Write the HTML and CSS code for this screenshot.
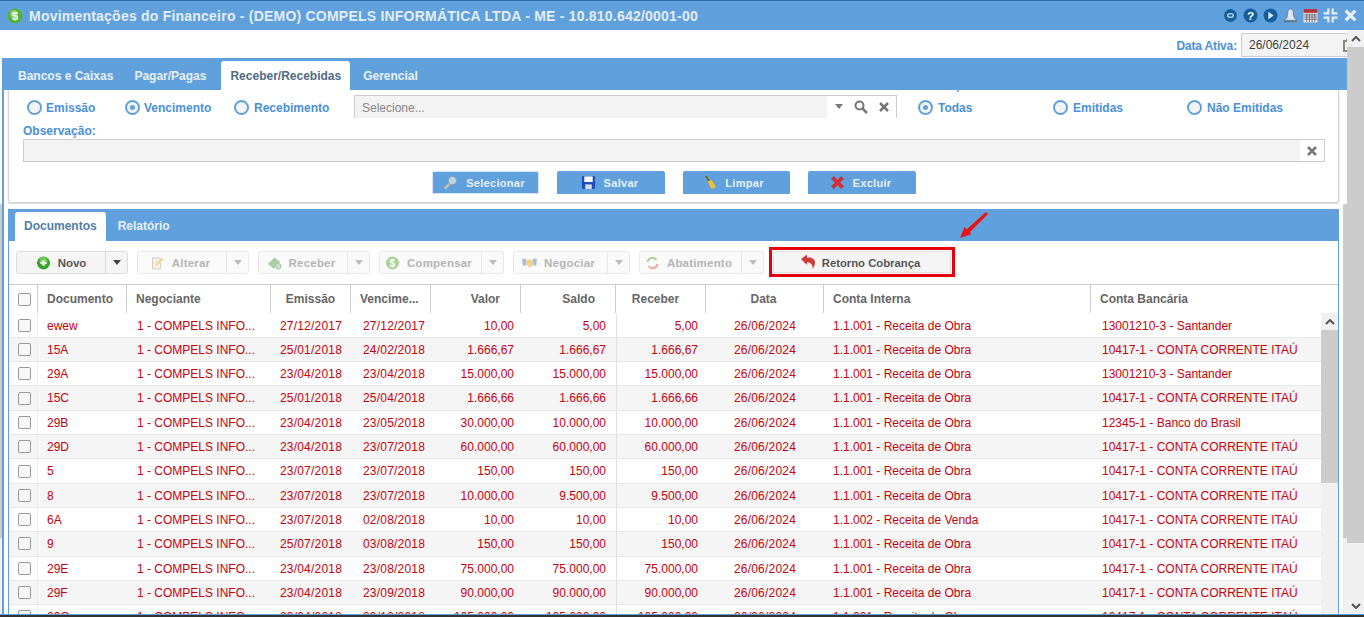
FILE: index.html
```html
<!DOCTYPE html>
<html lang="pt-BR">
<head>
<meta charset="utf-8">
<title>Movimentações do Financeiro</title>
<link rel="stylesheet" href="styles.css">
</head>
<body>
<svg class="defs" width="0" height="0" aria-hidden="true">
  <symbol id="caret" viewBox="0 0 10 6"><path d="M1 0h8L5 5z" fill="currentColor"/></symbol>
</svg>
<div class="app">
  <header class="titlebar">
    <svg class="logo" viewBox="0 0 16 16"><circle cx="8" cy="8" r="7.3" fill="#55b02c"/><circle cx="7" cy="6" r="4" fill="#8ed45c"/><text x="8" y="12" font-size="11" font-weight="700" text-anchor="middle" fill="#fff" font-family="Liberation Sans">$</text></svg>
    <h1 class="title">Movimentações do Financeiro - (DEMO) COMPELS INFORMÁTICA LTDA - ME - 10.810.642/0001-00</h1>
    <div class="winicons">
      <svg viewBox="0 0 14 14"><circle cx="7" cy="7" r="6" fill="#145f9b"/><rect x="4.500" y="5.500" width="5" height="3" rx="1" fill="none" stroke="#cfe0ef" stroke-width="1.200"/></svg>
      <svg viewBox="0 0 14 14"><circle cx="7" cy="7" r="6.500" fill="#145f9b"/><text x="7" y="11" font-size="11" font-weight="700" text-anchor="middle" fill="#fff" font-family="Liberation Sans">?</text></svg>
      <svg viewBox="0 0 14 14"><circle cx="7" cy="7" r="6.500" fill="#145f9b"/><path d="M5 3.500L10 7 5 10.500z" fill="#dbe8f3"/></svg>
      <svg viewBox="0 0 14 14"><path d="M7 1c1.800 0 2.300 1 2.600 3.500L10.300 9l2.700 2.500H1L3.700 9l.7-4.500C4.700 2 5.200 1 7 1z" fill="#dfe7ee" stroke="#5f7488" stroke-width=".7"/><rect x="1" y="12" width="12" height="1.300" fill="#5f7488"/></svg>
      <svg viewBox="0 0 14 14"><rect x=".5" y="1" width="13" height="12.500" fill="#e9e4e4"/><rect x=".5" y="1" width="13" height="3.500" fill="#b5343c"/><path d="M1 6.500h12M1 8.500h12M1 10.500h12M3.500 5v8M6 5v8M8.500 5v8M11 5v8" stroke="#6a6a7a" stroke-width=".8"/></svg>
      <svg viewBox="0 0 14 14"><path d="M5 .5V5H.5M9 .5V5h4.500M5 13.500V9H.5M9 13.500V9h4.500" fill="none" stroke="#e6eef6" stroke-width="2"/></svg>
      <svg viewBox="0 0 14 14"><path d="M2.500 2.500l9 9M11.500 2.500l-9 9" stroke="#e6eef6" stroke-width="3"/></svg>
    </div>
  </header>

  <div class="body">
    <div class="content">
      <div class="datebar">
        <span class="datelabel">Data Ativa:</span>
        <div class="dateinput"><span>26/06/2024</span>
          <svg viewBox="0 0 12 14"><rect x="1" y="3" width="10" height="10" fill="none" stroke="#8a8a7a" stroke-width="2"/><rect x="3" y="1" width="6" height="3" fill="#8a8a7a"/></svg>
        </div>
      </div>

      <nav class="maintabs">
        <a class="mtab">Bancos e Caixas</a>
        <a class="mtab">Pagar/Pagas</a>
        <a class="mtab active">Receber/Recebidas</a>
        <a class="mtab">Gerencial</a>
      </nav>

      <section class="upper">
        <div class="card">
          <div class="cutlabel">Situação:</div>
          <div class="filters">
            <label class="radio w98"><i class="dot"></i>Emissão</label>
            <label class="radio w109"><i class="dot on"></i>Vencimento</label>
            <label class="radio w120"><i class="dot"></i>Recebimento</label>
            <div class="select">
              <span class="ph">Selecione...</span>
              <span class="selbtns">
                <svg class="car" viewBox="0 0 10 6"><use href="#caret"/></svg>
                <svg viewBox="0 0 14 14"><circle cx="5.500" cy="5.500" r="4" fill="none" stroke="#777" stroke-width="2"/><path d="M8.500 8.500L13 13" stroke="#777" stroke-width="2.500"/></svg>
                <svg viewBox="0 0 12 12"><path d="M2 2l8 8M10 2l-8 8" stroke="#777" stroke-width="2.500"/></svg>
              </span>
            </div>
            <div class="rgroup">
              <label class="radio w135"><i class="dot on"></i>Todas</label>
              <label class="radio w134"><i class="dot"></i>Emitidas</label>
              <label class="radio"><i class="dot"></i>Não Emitidas</label>
            </div>
          </div>
          <div class="obslabel">Observação:</div>
          <div class="obsfield"><span class="obsx"><svg viewBox="0 0 12 12"><path d="M2 2l8 8M10 2l-8 8" stroke="#777" stroke-width="2.500"/></svg></span></div>
          <div class="actions">
            <button class="act focus w107"><svg viewBox="0 0 16 16"><path d="M7 9.500L2 14.500" stroke="#c9c2a8" stroke-width="2.500"/><circle cx="10" cy="6" r="4.500" fill="#b7d5ee" stroke="#8c9aa6"/></svg>Selecionar</button>
            <button class="act w108"><svg viewBox="0 0 16 16"><rect x="1" y="1" width="14" height="14" rx="1.500" fill="#1a4fc0"/><rect x="3.500" y="1.500" width="9" height="6" fill="#fff"/><rect x="4.500" y="10" width="7" height="5" fill="#d8dce4"/></svg>Salvar</button>
            <button class="act limpar w107"><svg viewBox="0 0 16 16"><path d="M3 1l4 6" stroke="#7a5a22" stroke-width="1.800"/><path d="M5 7l4-2 5 8-5 2z" fill="#eec327"/></svg>Limpar</button>
            <button class="act w108"><svg viewBox="0 0 16 16"><path d="M1.500 4L4 1.500l4 4 4-4L14.500 4l-4 4 4 4-2.500 2.500-4-4-4 4L1.500 12l4-4z" fill="#e02a32" stroke="#b9242a" stroke-width=".6"/></svg>Excluir</button>
          </div>
        </div>
      </section>

      <section class="lowerwrap">
        <div class="lower">
          <div class="panel">
            <nav class="subtabs">
              <a class="stab active">Documentos</a>
              <a class="stab">Relatório</a>
            </nav>
            <div class="toolbar">
              <div class="split w112 enabled"><span class="splitmain"><svg viewBox="0 0 14 14"><circle cx="7" cy="7" r="6.500" fill="#3aa02c"/><circle cx="7" cy="5" r="4" fill="#6fcf55"/><path d="M4 7h6M7 4v6" stroke="#fff" stroke-width="2"/></svg>Novo</span><span class="splitcar"><svg viewBox="0 0 10 6"><use href="#caret"/></svg></span></div>
              <div class="split w112"><span class="splitmain"><svg viewBox="0 0 14 14"><path d="M2 2h8v11H2z" fill="#f3efe2" stroke="#d5d0c4"/><path d="M5 10l1-3 6-5 1.500 1.500-6 5z" fill="#ecd79a"/></svg>Alterar</span><span class="splitcar"><svg viewBox="0 0 10 6"><use href="#caret"/></svg></span></div>
              <div class="split w112"><span class="splitmain"><svg viewBox="0 0 16 14"><path d="M1 8l7-7 6 5-7 7z" fill="#a9cfa6"/><circle cx="12" cy="10.500" r="3" fill="#cfe3cc" stroke="#9cc79a"/></svg>Receber</span><span class="splitcar"><svg viewBox="0 0 10 6"><use href="#caret"/></svg></span></div>
              <div class="split w125"><span class="splitmain"><svg viewBox="0 0 14 14"><circle cx="7" cy="7" r="6.500" fill="#a9d398"/><text x="7" y="11" font-size="10" font-weight="700" text-anchor="middle" fill="#fff" font-family="Liberation Sans">$</text></svg>Compensar</span><span class="splitcar"><svg viewBox="0 0 10 6"><use href="#caret"/></svg></span></div>
              <div class="split w117"><span class="splitmain"><svg viewBox="0 0 16 12"><path d="M0 2l4-1 1 7-4 1z" fill="#9cc0e6"/><path d="M16 2l-4-1-1 7 4 1z" fill="#9cc0e6"/><path d="M4 3l4-1 4 1 1 5-5 3-4-4z" fill="#f5cf94"/></svg>Negociar</span><span class="splitcar"><svg viewBox="0 0 10 6"><use href="#caret"/></svg></span></div>
              <div class="split w125"><span class="splitmain"><svg viewBox="0 0 14 14"><path d="M2 6a5 5 0 0 1 9-2" fill="none" stroke="#a9d398" stroke-width="2"/><path d="M12 8a5 5 0 0 1-9 2" fill="none" stroke="#eeaaa0" stroke-width="2"/></svg>Abatimento</span><span class="splitcar"><svg viewBox="0 0 10 6"><use href="#caret"/></svg></span></div>
              <div class="retorno"><button class="retbtn"><svg viewBox="0 0 16 16"><path d="M1 5L7 .5v3c4-.5 8 1 8 5 0 2.500-1 4.500-2.500 6.500.500-3-.500-6.500-5.500-6.800V11z" fill="#cf3a3a"/></svg>Retorno Cobrança</button>
                <svg class="arrow" viewBox="0 0 30 28"><path d="M27 0l2 2L10 21l-3-3z" fill="#ee1111"/><path d="M1 26l4.500-11 7 7z" fill="#ee1111"/></svg>
              </div>
            </div>
            <div class="thead grid">
              <span class="c"><i class="chk"></i></span>
              <span>Documento</span><span>Negociante</span><span class="ctr">Emissão</span><span>Vencime...</span>
              <span class="rhead">Valor</span><span class="rhead">Saldo</span><span class="ctr hrec">Receber</span><span class="ctr hdata">Data</span><span>Conta Interna</span><span>Conta Bancária</span>
            </div>
            <div class="tbodywrap">
              <div class="tbody" id="rows"></div>
              <div class="tscroll"><span class="arrowbtn"><svg viewBox="0 0 10 6"><path d="M1 5l4-4 4 4" fill="none" stroke="#555" stroke-width="2"/></svg></span><span class="tthumb"></span></div>
            </div>
          </div>
        </div>
      </section>
    </div>
    <aside class="pagescroll">
      <span class="arrowbtn"><svg viewBox="0 0 10 6"><path d="M1 5l4-4 4 4" fill="none" stroke="#555" stroke-width="2"/></svg></span>
      <span class="pgthumb"></span>
      <span class="pgtrack"></span>
      <span class="arrowbtn"><svg viewBox="0 0 10 6"><path d="M1 1l4 4 4-4" fill="none" stroke="#555" stroke-width="2"/></svg></span>
    </aside>
  </div>
  <footer class="footbar"></footer>
</div>
<script src="rows.js"></script>
</body>
</html>
```
FILE: rows.js
```js
var S = "13001210-3 - Santander", I = "10417-1 - CONTA CORRENTE ITAÚ", B = "12345-1 - Banco do Brasil";
var O = "1.1.001 - Receita de Obra", V = "1.1.002 - Receita de Venda";
var data = [
  ["ewew","27/12/2017","27/12/2017","10,00","5,00","5,00",O,S],
  ["15A","25/01/2018","24/02/2018","1.666,67","1.666,67","1.666,67",O,I],
  ["29A","23/04/2018","23/04/2018","15.000,00","15.000,00","15.000,00",O,S],
  ["15C","25/01/2018","25/04/2018","1.666,66","1.666,66","1.666,66",O,I],
  ["29B","23/04/2018","23/05/2018","30.000,00","10.000,00","10.000,00",O,B],
  ["29D","23/04/2018","23/07/2018","60.000,00","60.000,00","60.000,00",O,I],
  ["5","23/07/2018","23/07/2018","150,00","150,00","150,00",O,I],
  ["8","23/07/2018","23/07/2018","10.000,00","9.500,00","9.500,00",O,I],
  ["6A","23/07/2018","02/08/2018","10,00","10,00","10,00",V,I],
  ["9","25/07/2018","03/08/2018","150,00","150,00","150,00",O,I],
  ["29E","23/04/2018","23/08/2018","75.000,00","75.000,00","75.000,00",O,I],
  ["29F","23/04/2018","23/09/2018","90.000,00","90.000,00","90.000,00",O,I],
  ["29G","23/04/2018","23/10/2018","105.000,00","105.000,00","105.000,00",O,I]
];
document.getElementById("rows").innerHTML = data.map(function (r) {
  return '<div class="row grid"><span class="c"><i class="chk"></i></span>' +
    '<span class="doc">' + r[0] + '</span><span>1 - COMPELS INFO...</span>' +
    '<span class="ctr dt">' + r[1] + '</span><span class="dt venc">' + r[2] + '</span>' +
    '<span class="r rv">' + r[3] + '</span><span class="r rs">' + r[4] + '</span>' +
    '<span class="r rb">' + r[5] + '</span><span class="ctr dt">26/06/2024</span>' +
    '<span class="ci">' + r[6] + '</span><span class="cb">' + r[7] + '</span></div>';
}).join("");
```
FILE: styles.css
```css
* { box-sizing: border-box; }
html, body { margin: 0; height: 617px; overflow: hidden; background: #fff; }
body { font: 12px "Liberation Sans", Arial, sans-serif; color: #555; }
.defs { position: absolute; }
svg { display: block; flex: none; }

.app { height: 617px; display: flex; flex-direction: column; }

/* title bar */
.titlebar { height: 30px; flex: none; display: flex; align-items: center; background: #5fa0dd; border-top: 1px solid #2a6ea6; padding: 0 6px 0 7px; }
.logo { width: 16px; height: 16px; margin-right: 6px; }
.title { margin: 0; font-size: 14px; font-weight: 700; color: #e4edf6; letter-spacing: .22px; white-space: nowrap; flex: 1; }
.winicons { display: flex; align-items: center; gap: 5px; }
.winicons svg { width: 15px; height: 15px; }

.body { flex: 1; min-height: 0; display: flex; }
.content { width: 1347px; flex: none; display: flex; flex-direction: column; overflow: hidden; }

/* page scrollbar */
.pagescroll { flex: 1; display: flex; flex-direction: column; background: #f0f0f0; }
.arrowbtn { display: flex; height: 17px; flex: none; background: #f0f0f0; align-items: center; justify-content: center; }
.arrowbtn svg { width: 10px; height: 6px; }
.pgthumb { height: 496px; flex: none; background: #ccc; }
.pgtrack { flex: 1; }

/* active date */
.datebar { height: 28px; flex: none; display: flex; justify-content: flex-end; padding-top: 3px; }
.datelabel { color: #4a90d9; font-weight: 700; height: 24px; line-height: 26px; margin-right: 4px; letter-spacing: -.15px; }
.dateinput { width: 106px; height: 24px; background: #f3f3f3; border: 1px solid #ccc; border-right: 0; display: flex; align-items: center; padding-left: 7px; color: #3d3d3d; overflow: hidden; }
.dateinput span { width: 94px; flex: none; }
.dateinput svg { width: 12px; height: 14px; }

/* main tabs */
.maintabs { height: 32px; flex: none; background: #5fa0dd; margin-left: 2px; display: flex; align-items: flex-end; padding-left: 7px; }
.mtab { height: 29px; line-height: 30px; padding: 0 9px; margin-right: 3px; color: #e8f0f8; font-weight: 700; }
.mtab:nth-child(2) { margin-right: 6px; }
.mtab.active { background: #fff; color: #4f6b85; border-radius: 3px 3px 0 0; margin-right: 4px; }

/* filter card */
.upper { flex: none; margin-left: 2px; border-left: 2px solid #5fa0dd; padding: 0 8px 0 4px; height: 114px; }
.card { height: 113px; background: #fff; border: 1px solid #d4d4d4; border-top: 0; border-radius: 0 0 3px 3px; box-shadow: 0 1px 2px rgba(0,0,0,.2); overflow: hidden; padding: 0 13px 0 14px; }
.cutlabel { margin: -12px 0 3px 902px; height: 14px; line-height: 14px; color: #4a90d9; font-weight: 700; }

.filters { display: flex; align-items: center; height: 24px; padding-left: 4px; }
.radio { display: flex; align-items: center; color: #4a90d9; font-weight: 700; white-space: nowrap; padding-top: 1px; }
.w98 { width: 98px; } .w109 { width: 109px; } .w120 { width: 120px; } .w134 { width: 134px; } .w135 { width: 135px; }
.dot { width: 15px; height: 15px; border-radius: 50%; border: 2px solid #5fa0dd; background: #f3f3f3; margin-right: 4px; display: flex; align-items: center; justify-content: center; }
.w120 .dot, .rgroup .dot { margin-right: 5px; }
.dot.on::after { content: ""; width: 5px; height: 5px; border-radius: 50%; background: #5fa0dd; }
.select { width: 543px; height: 23px; align-self: flex-start; border: 1px solid #ccc; border-bottom: 0; display: flex; align-items: center; background: #fff; }
.ph { flex: 1; height: 100%; background: #f3f3f3; padding-left: 7px; line-height: 24px; color: #888; }
.selbtns { width: 69px; display: flex; align-items: center; gap: 10px; padding-left: 7px; }
.selbtns .car { width: 10px; height: 6px; color: #777; }
.selbtns svg { width: 14px; height: 14px; }
.selbtns svg:last-child { width: 12px; height: 12px; }
.rgroup { display: flex; margin-left: 21px; }

.obslabel { margin-top: 5px; color: #4a90d9; font-weight: 700; height: 15px; line-height: 15px; }
.obsfield { height: 23px; background: #f3f3f3; border: 1px solid #ccc; display: flex; justify-content: flex-end; }
.obsx { width: 24px; background: #fff; display: flex; align-items: center; justify-content: center; }
.obsx svg { width: 12px; height: 12px; }

.actions { display: flex; justify-content: center; gap: 18px; margin-top: 9px; }
.act { height: 23px; display: flex; align-items: center; justify-content: center; gap: 8px; background: #5fa0dd; border: 0; border-radius: 2px 2px 0 0; color: #e8f0f8; font: 700 11px "Liberation Sans", Arial, sans-serif; letter-spacing: .3px; padding: 0 3px 0 0; }
.act svg { width: 15px; height: 15px; }
.act.focus { border: 1px solid #d5e6f6; }
.act.limpar { gap: 7px; padding-right: 6px; }
.act.w107 { width: 107px; } .act.w108 { width: 108px; }

/* documents panel */
.lowerwrap { flex: 1; min-height: 0; background: linear-gradient(#ccc 334px, #f0f0f0 334px); }
.lower { height: 100%; margin: 0 4px 0 2px; background: #fff; border-left: 2px solid #5fa0dd; padding: 5px 4px 0; overflow: hidden; }
.panel { height: 100%; border-left: 1px solid #5fa0dd; border-right: 1px solid #5fa0dd; display: flex; flex-direction: column; }

.subtabs { height: 32px; flex: none; background: #5fa0dd; display: flex; align-items: flex-end; padding-left: 6px; }
.stab { height: 29px; line-height: 28px; padding: 0 9px; margin-right: 3px; color: #e8f0f8; font-weight: 700; }
.stab.active { background: #fff; color: #4f7da8; border-radius: 3px 3px 0 0; }

.toolbar { height: 44px; flex: none; display: flex; align-items: flex-start; gap: 9px; padding: 10px 0 0 7px; border-bottom: 1px solid #ccc; }
.split { height: 23px; display: flex; border: 1px solid #e8e8e8; border-radius: 3px; background: #fafafa; color: #b5b5b5; font-weight: 700; font-size: 11.500px; letter-spacing: .2px; }
.splitmain { flex: 1; display: flex; align-items: center; justify-content: center; gap: 7px; padding-right: 4px; }
.splitmain svg { width: 15px; height: 14px; }
.splitcar { width: 22px; border-left: 1px solid #e8e8e8; display: flex; align-items: center; justify-content: center; color: #bbb; }
.splitcar svg { width: 10px; height: 6px; }
.split.enabled { border-color: #ddd; background: #f5f5f5; color: #555; letter-spacing: 0; }
.split.enabled .splitmain { padding-right: 0; }
.split.enabled .splitcar { color: #444; border-color: #ddd; }
.split.w112 { width: 112px; } .split.w125 { width: 125px; } .split.w117 { width: 117px; }

.retorno { position: relative; width: 186px; height: 30px; border: 3px solid #e8000b; margin: -4px 0 0 -4px; padding: 1px; background: #fff; }
.retbtn { width: 100%; height: 100%; border: 1px solid #e2e2e2; background: #f5f5f5; display: flex; align-items: center; justify-content: center; gap: 6px; color: #555; font: 700 11.300px "Liberation Sans", Arial, sans-serif; padding: 2px 4px 0 0; }
.retbtn svg { width: 16px; height: 16px; margin-top: -2px; }
.arrow { position: absolute; left: 187px; top: -38px; width: 30px; height: 28px; }

/* table */
.grid { display: grid; grid-template-columns: 29px 89px 144px 80px 80px 90px 95px 90px 118px 267px 1fr; }
.thead { height: 28px; flex: none; color: #666; font-weight: 700; line-height: 28px; }
.thead > span { padding-left: 9px; border-right: 1px solid #ccc; }
.thead > span:last-child { border-right: 0; }
.thead > .ctr { padding-left: 0; text-align: center; }
.thead > .hrec { padding-right: 10px; }
.thead > .hdata { padding-right: 2px; }
.thead > .rhead { padding: 0 20px 0 0; text-align: right; }
.thead > .c { padding: 0 0 0 3px; display: flex; align-items: center; justify-content: center; }
.chk { display: block; width: 13px; height: 13px; border: 1px solid #999; border-radius: 2px; background: #f7f7f7; }

.tbodywrap { flex: 1; min-height: 0; display: flex; overflow: hidden; }
.tbody { flex: 1; min-width: 0; color: #c8000c; padding-top: .6px; }
.row { height: 24.300px; line-height: 25px; border-bottom: 1px solid #e8e8e8; white-space: nowrap; }
.row:nth-child(even) { background: #f5f5f5; }
.row > span { padding-left: 10px; overflow: hidden; }
.row > .doc { padding-left: 9px; }
.row > .c { padding: 0 0 0 3px; display: flex; align-items: center; justify-content: center; border-right: 1px solid #eee; }
.row > .ctr { padding-left: 0; text-align: center; }
.row > .dt { letter-spacing: .2px; }
.row > .venc { padding-left: 12px; }
.row > .r { padding: 0; text-align: right; }
.row > .rv { padding-right: 7px; }
.row > .rs { padding-right: 10px; }
.row > .rb { padding-right: 8px; border-left: 1px solid #e0e0e0; }
.row > .ci { padding-left: 9px; }
.row > .cb { padding-left: 11px; }
.tscroll { width: 17px; flex: none; background: #f0f0f0; }
.tthumb { display: block; height: 153px; background: #ccc; }

.footbar { height: 3px; flex: none; background: #333; border-top: 1px solid #5fa0dd; }
```
